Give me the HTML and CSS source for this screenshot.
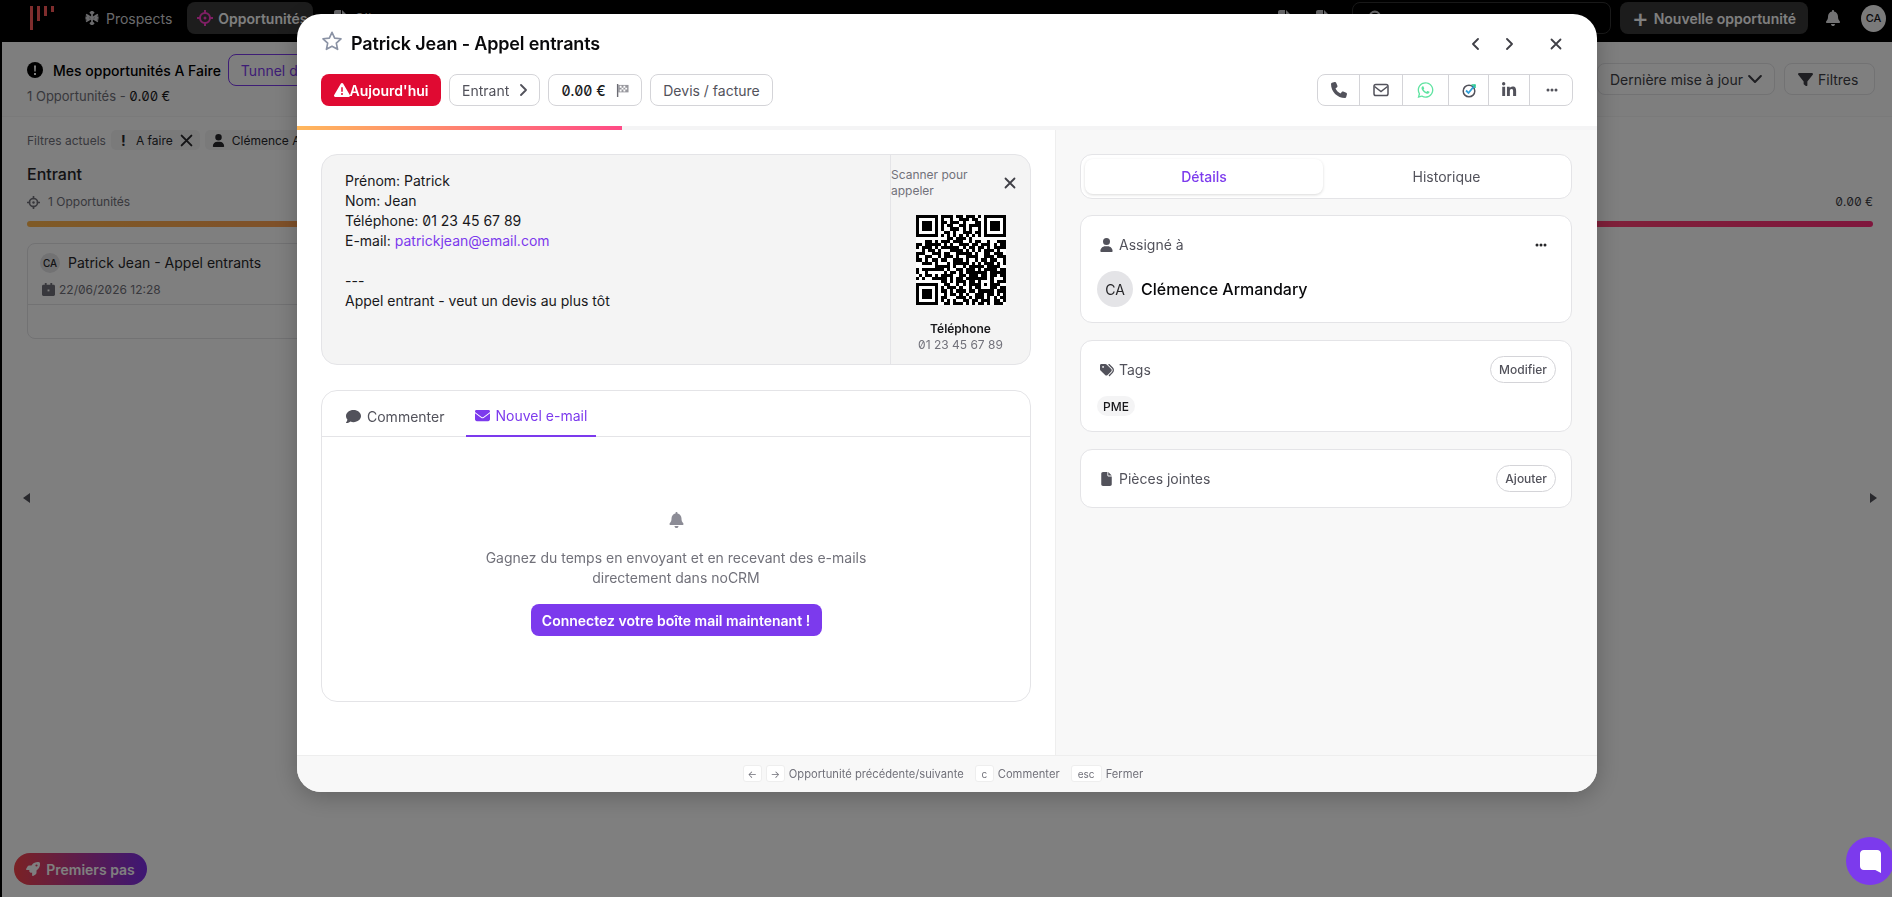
FILE: index.html
```html
<!DOCTYPE html>
<html lang="fr">
<head>
	<meta charset="utf-8">
	<title>Patrick Jean - Appel entrants</title>
	<link rel="stylesheet" href="styles.css">
</head>
<body>
	<!-- icones -->
	<svg class="sprite" xmlns="http://www.w3.org/2000/svg">
		<symbol id="i-phone" viewBox="0 0 512 512"><path d="M164.9 24.6c-7.7-18.6-28-28.5-47.4-23.2l-88 24C12.1 30.2 0 46 0 64C0 311.4 200.6 512 448 512c18 0 33.8-12.1 38.6-29.5l24-88c5.3-19.4-4.6-39.7-23.2-47.4l-96-40c-16.3-6.8-35.2-2.1-46.3 11.6L304.7 368C234.3 334.7 177.3 277.7 144 207.3L193.3 167c13.7-11.2 18.4-30 11.6-46.3l-40-96z"/></symbol>
		<symbol id="i-bell" viewBox="0 0 448 512"><path d="M224 0c-17.7 0-32 14.3-32 32V51.2C119 66 64 130.6 64 208v18.8c0 47-17.3 92.4-48.5 127.6l-7.4 8.3c-8.4 9.4-10.4 22.9-5.3 34.4S19.4 416 32 416H416c12.6 0 24-7.4 29.2-18.9s3.1-25-5.3-34.4l-7.4-8.3C401.3 319.2 384 273.9 384 226.8V208c0-77.4-55-142-128-156.8V32c0-17.7-14.3-32-32-32zm45.3 493.3c12-12 18.7-28.3 18.7-45.3H224 160c0 17 6.7 33.3 18.7 45.3s28.3 18.7 45.3 18.7s33.3-6.7 45.3-18.7z"/></symbol>
		<symbol id="i-user" viewBox="0 0 448 512"><path d="M224 256A128 128 0 1 0 224 0a128 128 0 1 0 0 256zm-45.7 48C79.8 304 0 383.8 0 482.3C0 498.7 13.3 512 29.7 512H418.3c16.4 0 29.7-13.3 29.7-29.7C448 383.8 368.2 304 269.7 304H178.3z"/></symbol>
		<symbol id="i-warn" viewBox="0 0 512 512"><path d="M256 32c14.2 0 27.3 7.5 34.5 19.8l216 368c7.3 12.4 7.3 27.7 .2 40.1S486.3 480 472 480H40c-14.3 0-27.6-7.7-34.7-20.1s-7-27.8 .2-40.1l216-368C228.7 39.5 241.8 32 256 32zm0 128c-13.3 0-24 10.7-24 24V296c0 13.3 10.7 24 24 24s24-10.7 24-24V184c0-13.3-10.7-24-24-24zm32 224a32 32 0 1 0 -64 0 32 32 0 1 0 64 0z"/></symbol>
		<symbol id="i-envelope" viewBox="0 0 512 512"><path d="M48 64C21.5 64 0 85.5 0 112c0 15.1 7.1 29.3 19.2 38.4L236.8 313.6c11.4 8.5 27 8.5 38.4 0L492.8 150.4c12.1-9.1 19.2-23.3 19.2-38.4c0-26.5-21.5-48-48-48H48zM0 176V384c0 35.3 28.7 64 64 64H448c35.3 0 64-28.7 64-64V176L294.4 339.2c-22.8 17.1-54 17.1-76.8 0L0 176z"/></symbol>
		<symbol id="i-comment" viewBox="0 0 512 512"><path d="M512 240c0 114.9-114.6 208-256 208c-37.1 0-72.3-6.4-104.1-17.9c-11.9 8.7-31.3 20.6-54.3 30.6C73.6 471.1 44.7 480 16 480c-6.5 0-12.3-3.9-14.8-9.9c-2.5-6-1.1-12.8 3.4-17.4l.3-.3c.3-.3 .7-.7 1.3-1.4c1.1-1.2 2.8-3.1 4.9-5.7c4.1-5 9.6-12.4 15.2-21.6c10-16.6 19.5-38.4 21.4-62.9C17.7 326.8 0 285.1 0 240C0 125.1 114.6 32 256 32s256 93.1 256 208z"/></symbol>
		<symbol id="i-file" viewBox="0 0 384 512"><path d="M0 64C0 28.7 28.7 0 64 0H224V128c0 17.7 14.3 32 32 32H384V448c0 35.3-28.7 64-64 64H64c-35.3 0-64-28.7-64-64V64zm384 64H256V0L384 128z"/></symbol>
		<symbol id="i-tags" viewBox="0 0 512 512"><path d="M345 39.1L472.8 168.4c52.4 53 52.4 138.2 0 191.2L360.8 472.9c-9.3 9.4-24.5 9.5-33.9 .2s-9.5-24.5-.2-33.9L438.6 325.9c33.9-34.3 33.9-89.4 0-123.7L310.9 72.9c-9.3-9.4-9.2-24.6 .2-33.9s24.6-9.2 33.9 .2zM0 229.5V80C0 53.5 21.5 32 48 32H197.5c17 0 33.3 6.7 45.3 18.7l168 168c25 25 25 65.5 0 90.5L277.3 442.7c-25 25-65.5 25-90.5 0l-168-168C6.7 262.7 0 246.5 0 229.5zM144 144a32 32 0 1 0 -64 0 32 32 0 1 0 64 0z"/></symbol>
		<symbol id="i-linkedin" viewBox="0 0 448 512"><path d="M100.28 448H7.4V148.9h92.88zM53.79 108.1C24.09 108.1 0 83.5 0 53.8a53.79 53.79 0 0 1 107.58 0c0 29.7-24.1 54.3-53.79 54.3zM447.9 448h-92.68V302.4c0-34.7-.7-79.2-48.29-79.2-48.29 0-55.69 37.7-55.69 76.7V448h-92.78V148.9h89.08v40.8h1.3c12.4-23.5 44.66-48.3 91.93-48.3 94 0 111.28 61.9 111.28 142.3V448z"/></symbol>
		<symbol id="i-whatsapp" viewBox="0 0 448 512"><path d="M380.9 97.1C339 55.1 283.2 32 223.9 32c-122.4 0-222 99.6-222 222 0 39.1 10.2 77.3 29.6 111L0 480l117.7-30.9c32.4 17.7 68.9 27 106.1 27h.1c122.3 0 224.1-99.6 224.1-222 0-59.3-25.2-115-67.1-157zm-157 341.6c-33.2 0-65.7-8.9-94-25.7l-6.7-4-69.8 18.3L72 359.2l-4.4-7c-18.5-29.4-28.2-63.3-28.2-98.2 0-101.7 82.8-184.5 184.6-184.5 49.3 0 95.6 19.2 130.4 54.1 34.8 34.9 56.2 81.2 56.1 130.5 0 101.8-84.9 184.6-186.6 184.6zm101.2-138.2c-5.5-2.8-32.8-16.2-37.9-18-5.1-1.9-8.8-2.8-12.5 2.8-3.7 5.6-14.3 18-17.6 21.8-3.2 3.7-6.5 4.2-12 1.4-32.6-16.3-54-29.1-75.5-66-5.7-9.8 5.7-9.1 16.3-30.3 1.8-3.7.9-6.9-.5-9.7-1.4-2.8-12.5-30.1-17.1-41.2-4.5-10.8-9.1-9.3-12.5-9.5-3.2-.2-6.9-.2-10.6-.2-3.7 0-9.7 1.4-14.8 6.9-5.1 5.6-19.4 19-19.4 46.3 0 27.3 19.9 53.7 22.6 57.4 2.8 3.7 39.1 59.7 94.8 83.8 35.2 15.2 49 16.5 66.6 13.9 10.7-1.6 32.8-13.4 37.4-26.4 4.6-13 4.6-24.1 3.2-26.4-1.3-2.5-5-3.9-10.5-6.6z"/></symbol>
		<symbol id="i-rocket" viewBox="0 0 512 512"><path d="M156.6 384.9L125.7 354c-8.5-8.5-11.5-20.8-7.7-32.2c3-8.9 7-20.5 11.8-33.8L24 288c-8.6 0-16.6-4.6-20.9-12.1s-4.2-16.7 .2-24.1l52.5-88.5c13-21.9 36.5-35.3 61.9-35.3l82.3 0c2.4-4 4.8-7.7 7.2-11.3C289.1-4.1 411.1-8.1 483.9 5.3c11.6 2.1 20.6 11.2 22.8 22.8c13.4 72.9 9.3 194.8-111.4 276.7c-3.5 2.4-7.3 4.8-11.3 7.2v82.3c0 25.4-13.4 49-35.3 61.9l-88.5 52.5c-7.4 4.4-16.6 4.5-24.1 .2s-12.1-12.2-12.1-20.9V380.8c-14.1 4.9-26.4 8.9-35.7 11.9c-11.2 3.6-23.4 .5-31.8-7.8zM384 168a40 40 0 1 0 0-80 40 40 0 1 0 0 80z"/></symbol>
		<symbol id="i-filter" viewBox="0 0 512 512"><path d="M3.9 54.9C10.5 40.9 24.5 32 40 32H472c15.5 0 29.5 8.9 36.1 22.9s4.6 30.5-5.2 42.5L320 320.9V448c0 12.1-6.8 23.2-17.7 28.6s-23.8 4.3-33.5-3l-64-48c-8.1-6-12.8-15.5-12.8-25.6V320.9L9 97.3C-.7 85.4-2.8 68.8 3.9 54.9z"/></symbol>
		<symbol id="i-target" viewBox="0 0 16 16"><circle cx="8" cy="8" r="5" fill="none" stroke="currentColor" stroke-width="2"/><circle cx="8" cy="8" r="1.5"/><path d="M7 0h2v4H7zM7 12h2v4H7zM0 7h4v2H0zM12 7h4v2h-4z"/></symbol>
		<symbol id="i-snow" viewBox="0 0 16 16"><path d="M8 1v14M2 4.5l12 7M14 4.5l-12 7M6 2l2 2 2-2M6 14l2-2 2 2M1.500 7l2.700 .7-.7-2.700M14.500 9l-2.700-.7 .7 2.700M14.500 7l-2.700 .7 .7-2.700M1.500 9l2.700-.7-.7 2.700" fill="none" stroke="currentColor" stroke-width="1.800"/></symbol>
		<symbol id="i-x" viewBox="0 0 12 12"><path d="M1.500 1.500l9 9M10.500 1.500l-9 9" fill="none" stroke="currentColor" stroke-width="1.800" stroke-linecap="round"/></symbol>
		<symbol id="i-left" viewBox="0 0 12 12"><path d="M8 1L3 6l5 5" fill="none" stroke="currentColor" stroke-width="1.800" stroke-linecap="round" stroke-linejoin="round"/></symbol>
		<symbol id="i-right" viewBox="0 0 12 12"><path d="M4 1l5 5-5 5" fill="none" stroke="currentColor" stroke-width="1.800" stroke-linecap="round" stroke-linejoin="round"/></symbol>
		<symbol id="i-down" viewBox="0 0 12 12"><path d="M1 3.500l5 5 5-5" fill="none" stroke="currentColor" stroke-width="1.800" stroke-linecap="round" stroke-linejoin="round"/></symbol>
		<symbol id="i-dots" viewBox="0 0 12 4"><circle cx="2" cy="2" r="1.500"/><circle cx="6" cy="2" r="1.500"/><circle cx="10" cy="2" r="1.500"/></symbol>
		<symbol id="i-mail" viewBox="0 0 16 14"><rect x="1" y="1.500" width="14" height="11" rx="1.800" fill="none" stroke="currentColor" stroke-width="1.500"/><path d="M1.500 3.500L8 8.500l6.500-5" fill="none" stroke="currentColor" stroke-width="1.500"/></symbol>
		<symbol id="i-flag" viewBox="0 0 14 14"><path d="M1 0h1.500v14H1z"/><path d="M2.500 1h11v8h-11z" opacity=".7"/><path d="M4 2h2v2H4zM8 2h2v2H8zM6 4h2v2H6zM10 4h2v2h-2zM4 6h2v2H4zM8 6h2v2H8z" fill="#fff"/></symbol>
		<symbol id="i-calendar" viewBox="0 0 14 14"><path d="M3 0h2v2h4V0h2v2h1.500c.8 0 1.500 .7 1.500 1.500v9c0 .8-.7 1.500-1.500 1.500h-11C.7 14 0 13.300 0 12.500v-9C0 2.700 .7 2 1.500 2H3z"/><path d="M6 7h2v2H6z" fill="#fff"/></symbol>
		<symbol id="i-alert" viewBox="0 0 16 16"><circle cx="8" cy="8" r="8"/><path d="M7 3.500h2l-.3 6H7.300zM7 11h2v2H7z" fill="#fff"/></symbol>
		<symbol id="i-search" viewBox="0 0 14 14"><circle cx="6" cy="6" r="4.500" fill="none" stroke="currentColor" stroke-width="2"/><path d="M9.500 9.500L13 13" stroke="currentColor" stroke-width="2"/></symbol>
	</svg>

	<div class="page">
		<header class="topbar">
			<svg class="logo" viewBox="0 0 24 24" aria-hidden="true"><path d="M0 0h3v24H0zM7 0h3v15H7zM14 0h3v10h-3zM21 0h3v6h-3z"/></svg>
			<a class="nav-item nav-first"><svg class="icon"><use href="#i-snow"/></svg>Prospects</a>
			<a class="nav-item nav-active"><svg class="icon icon-pink"><use href="#i-target"/></svg>Opportunités</a>
			<a class="nav-item nav-clients"><svg class="icon"><use href="#i-file"/></svg>Clients</a>
			<span class="nav-spacer"></span>
			<svg class="icon top-icon"><use href="#i-file"/></svg>
			<svg class="icon top-icon"><use href="#i-file"/></svg>
			<div class="search"><svg class="icon"><use href="#i-search"/></svg></div>
			<button class="new-btn"><span class="plus">+</span>Nouvelle opportunité</button>
			<svg class="icon top-bell"><use href="#i-bell"/></svg>
			<span class="top-avatar">CA</span>
		</header>

		<main class="board">
			<div class="board-head">
				<div>
					<div class="board-title">
						<svg class="icon"><use href="#i-alert"/></svg>
						<strong>Mes opportunités A Faire</strong>
						<span class="tunnel">Tunnel de vente</span>
					</div>
					<div class="board-sub">1 Opportunités - <span class="dark">0.00 €</span></div>
				</div>
				<div class="board-tools">
					<button class="tool-btn">Dernière mise à jour <svg class="icon-chevron"><use href="#i-down"/></svg></button>
					<button class="tool-btn tool-filter"><svg class="icon-funnel"><use href="#i-filter"/></svg> Filtres</button>
				</div>
			</div>
			<div class="board-body">
				<div class="filters">
					<span>Filtres actuels</span>
					<span class="filter-chip"><b class="bang">!</b> A faire <svg class="icon-xs"><use href="#i-x"/></svg></span>
					<span class="filter-chip"><svg class="icon-xs"><use href="#i-user"/></svg> Clémence Armandary</span>
				</div>
				<h2 class="col-title">Entrant</h2>
				<div class="col-meta">
					<span class="col-count"><svg class="icon-xs"><use href="#i-target"/></svg> 1 Opportunités</span>
					<span class="col-total">0.00 €</span>
				</div>
				<div class="col-bar"></div>
				<div class="lead">
					<div class="lead-top"><span class="lead-avatar">CA</span> Patrick Jean - Appel entrants</div>
					<div class="lead-date"><svg class="icon-xs"><use href="#i-calendar"/></svg> 22/06/2026 12:28</div>
					<div class="lead-foot"></div>
				</div>
			</div>
			<span class="scroll-arrow scroll-left"></span>
			<span class="scroll-arrow scroll-right"></span>
			<button class="first-steps"><svg class="icon"><use href="#i-rocket"/></svg> Premiers pas</button>
		</main>
	</div>

	<div class="overlay">
		<section class="modal">
			<div class="modal-head">
				<div class="title-row">
					<svg class="star" viewBox="0 0 24 24"><path d="M12 2.500l2.900 6.300 6.900 .8-5.100 4.700 1.400 6.800-6.100-3.400-6.100 3.400 1.400-6.800-5.100-4.700 6.900-.8z"/></svg>
					<h1>Patrick Jean - Appel entrants</h1>
					<div class="title-nav">
						<svg class="nav-arrow"><use href="#i-left"/></svg>
						<svg class="nav-arrow"><use href="#i-right"/></svg>
						<svg class="nav-close"><use href="#i-x"/></svg>
					</div>
				</div>
				<div class="action-row">
					<button class="pill pill-red"><svg class="icon"><use href="#i-warn"/></svg>Aujourd'hui</button>
					<button class="pill pill-step">Entrant <svg class="icon-sm"><use href="#i-right"/></svg></button>
					<button class="pill pill-amount"><span>0.00 €</span> <svg class="icon-flag"><use href="#i-flag"/></svg></button>
					<button class="pill pill-quote">Devis / facture</button>
					<div class="contact-group">
						<button><svg class="icon"><use href="#i-phone"/></svg></button>
						<button><svg class="icon"><use href="#i-mail"/></svg></button>
						<button class="wa"><svg class="icon-wa"><use href="#i-whatsapp"/></svg></button>
						<button>
							<svg class="icon" viewBox="0 0 16 16"><circle cx="8" cy="9" r="5.800" fill="none" stroke="#52525b" stroke-width="1.500"/><path d="M5 8.500l2.500 2.500L14 3" fill="none" stroke="#2f9fd8" stroke-width="1.800"/><path d="M10.500 3H14v3" fill="none" stroke="#2ecc8f" stroke-width="1.500"/></svg>
						</button>
						<button><svg class="icon"><use href="#i-linkedin"/></svg></button>
						<button><svg class="icon-dots"><use href="#i-dots"/></svg></button>
					</div>
				</div>
			</div>
			<div class="progress"><div class="progress-fill"></div></div>

			<div class="modal-body">
				<div class="col-left">
					<div class="info-card">
						<div class="info-text">
							<p>Prénom: Patrick</p>
							<p>Nom: Jean</p>
							<p>Téléphone: 01 23 45 67 89</p>
							<p>E-mail: <a href="#">patrickjean@email.com</a></p>
							<p>&nbsp;</p>
							<p>---</p>
							<p>Appel entrant - veut un devis au plus tôt</p>
						</div>
						<div class="qr-pane">
							<div class="qr-head">
								<span>Scanner pour appeler</span>
								<svg class="qr-close"><use href="#i-x"/></svg>
							</div>
							<svg id="qr" class="qr" viewBox="0 0 29 29" shape-rendering="crispEdges"></svg>
							<div class="qr-label">Téléphone</div>
							<div class="qr-number">01 23 45 67 89</div>
						</div>
					</div>

					<div class="compose-card">
						<div class="compose-tabs">
							<a class="compose-tab"><svg class="icon"><use href="#i-comment"/></svg>Commenter</a>
							<a class="compose-tab compose-tab--on"><svg class="icon"><use href="#i-envelope"/></svg>Nouvel e-mail</a>
						</div>
						<div class="compose-empty">
							<svg class="empty-bell"><use href="#i-bell"/></svg>
							<p>Gagnez du temps en envoyant et en recevant des e-mails<br>directement dans noCRM</p>
							<button class="connect-btn">Connectez votre boîte mail maintenant !</button>
						</div>
					</div>
				</div>

				<aside class="col-right">
					<div class="side-tabs">
						<span class="side-tab side-tab--on">Détails</span>
						<span class="side-tab side-tab--off">Historique</span>
					</div>
					<div class="side-card">
						<div class="side-head">
							<span class="side-label"><span class="side-icon"><svg class="icon-side"><use href="#i-user"/></svg></span>Assigné à</span>
							<svg class="side-dots"><use href="#i-dots"/></svg>
						</div>
						<div class="assignee"><span class="assignee-avatar">CA</span>Clémence Armandary</div>
					</div>
					<div class="side-card">
						<div class="side-head">
							<span class="side-label"><span class="side-icon"><svg class="icon-tags"><use href="#i-tags"/></svg></span>Tags</span>
							<button class="round-btn">Modifier</button>
						</div>
						<span class="tag-chip">PME</span>
					</div>
					<div class="side-card">
						<div class="side-head">
							<span class="side-label"><span class="side-icon"><svg class="icon-side"><use href="#i-file"/></svg></span>Pièces jointes</span>
							<button class="round-btn">Ajouter</button>
						</div>
					</div>
				</aside>
			</div>

			<footer class="modal-foot">
				<kbd>←</kbd><kbd class="key-next">→</kbd><span>Opportunité précédente/suivante</span>
				<kbd class="key-gap">c</kbd><span>Commenter</span>
				<kbd class="key-gap key-esc">esc</kbd><span>Fermer</span>
			</footer>
		</section>
	</div>

	<button class="chat-btn" aria-label="Chat">
		<svg viewBox="0 0 22 24"><path d="M4 0h14c2.200 0 4 1.800 4 4v20l-6-3H4c-2.200 0-4-1.800-4-4V4c0-2.200 1.800-4 4-4z"/></svg>
	</button>

	<script src="qr.js"></script>
</body>
</html>
```
FILE: styles.css
```css
* {
	box-sizing: border-box;
}

html,
body {
	height: 100%;
}

body {
	margin: 0;
	background: #000;
	color: #18181b;
	font-family: Inter, "Noto Sans", sans-serif;
	font-size: 14px;
	font-feature-settings: "zero";
	overflow: hidden;
}

button {
	font: inherit;
	font-feature-settings: inherit;
	cursor: pointer;
}

h1,
h2,
p {
	margin: 0;
}

.sprite {
	display: none;
}

svg {
	fill: currentColor;
	flex: none;
}

.icon {
	width: 16px;
	height: 16px;
}

.icon-sm {
	width: 12px;
	height: 12px;
}

.icon-xs {
	width: 13px;
	height: 13px;
}

/* page derriere la modale */
.page {
	height: 100%;
	display: flex;
	flex-direction: column;
}

.topbar {
	height: 42px;
	flex: none;
	display: flex;
	align-items: center;
	padding: 0 6px 6px 30px;
	color: #fff;
}

.logo {
	width: 24px;
	height: 24px;
	fill: #ff5a5a;
}

.nav-item {
	display: flex;
	align-items: center;
	gap: 6px;
	color: #d4d4d8;
}

.nav-first {
	margin-left: 30px;
}

.nav-active {
	margin-left: 15px;
	width: 126px;
	height: 32px;
	padding: 0 10px;
	gap: 5px;
	border-radius: 8px;
	background: #3a3a3a;
	color: #fff;
	font-weight: 600;
	white-space: nowrap;
}

.icon-pink {
	color: #ff3ec9;
}

.nav-clients {
	margin-left: 19px;
}

.nav-spacer {
	flex: 1;
}

.top-icon {
	margin-right: 22px;
	color: #d4d4d8;
}

.search {
	width: 259px;
	height: 32px;
	display: flex;
	align-items: center;
	padding-left: 15px;
	border: 1px solid #333;
	border-radius: 8px;
	color: #d4d4d8;
}

.new-btn {
	margin-left: 9px;
	width: 188px;
	height: 32px;
	display: flex;
	align-items: center;
	justify-content: center;
	gap: 5px;
	border: 0;
	border-radius: 8px;
	background: #393939;
	color: #fff;
	font-size: 14px;
	font-weight: 600;
}

.plus {
	font-size: 25px;
	font-weight: 500;
	line-height: 22px;
}

.top-bell {
	margin: 0 20px 0 17px;
	color: #e4e4e7;
}

.top-avatar {
	width: 25px;
	height: 27px;
	border-radius: 50%;
	background: #f4f4f5;
	color: #18181b;
	font-size: 11px;
	font-weight: 500;
	display: flex;
	align-items: center;
	justify-content: center;
}

.board {
	position: relative;
	flex: 1;
	margin-left: 2px;
	background: #fff;
	border-radius: 16px 0 0 0;
}

.board-head {
	height: 75px;
	display: flex;
	justify-content: space-between;
	align-items: center;
	padding: 0 17px 0 25px;
	border-bottom: 1px solid #f4f4f5;
	background: #fcfcfc;
}

.board-title {
	display: flex;
	align-items: center;
	gap: 7px;
	color: #000;
}

.board-title strong {
	font-weight: 500;
	margin-left: 3px;
}

.tunnel {
	height: 32px;
	padding: 0 12px;
	display: flex;
	align-items: center;
	border: 1px solid #7c3aed;
	border-radius: 8px;
	color: #7c3aed;
	font-size: 14px;
	white-space: nowrap;
}

.board-sub {
	margin-top: 2px;
	font-size: 13px;
	color: #71717a;
}

.dark {
	color: #18181b;
	font-feature-settings: "zero", "tnum";
}

.board-tools {
	display: flex;
	gap: 9px;
}

.tool-btn {
	height: 32px;
	padding: 0 12px;
	display: flex;
	align-items: center;
	gap: 5px;
	border: 1px solid #e4e4e7;
	border-radius: 8px;
	background: #fff;
	color: #3f3f46;
}

.tool-filter {
	width: 91px;
	padding: 0 0 0 13px;
}

.icon-chevron {
	width: 14px;
	height: 14px;
}

.icon-funnel {
	width: 15px;
	height: 15px;
}

.board-body {
	padding: 13px 19px 0 25px;
}

.filters {
	display: flex;
	align-items: center;
	gap: 5px;
	font-size: 12px;
	color: #71717a;
}

.filter-chip {
	height: 20px;
	padding: 0 7px;
	display: inline-flex;
	align-items: center;
	gap: 7px;
	border-radius: 5px;
	background: #f4f4f5;
	color: #27272a;
}

.bang {
	font-size: 14px;
	width: 11px;
	text-align: center;
}

.col-title {
	margin-top: 14px;
	font-size: 16px;
	font-weight: 500;
	line-height: 20px;
	color: #27272a;
}

.col-meta {
	margin-top: 9px;
	display: flex;
	justify-content: space-between;
	font-size: 12px;
	line-height: 18px;
	color: #71717a;
}

.col-count {
	display: flex;
	align-items: center;
	gap: 8px;
}

.col-total {
	color: #3f3f46;
	font-feature-settings: "zero", "tnum";
}

.col-bar {
	margin-top: 10px;
	height: 6px;
	border-radius: 3px;
	background: linear-gradient(90deg, #ffb54d, #ff2d7a);
}

.lead {
	margin-top: 16px;
	width: 320px;
	height: 96px;
	border: 1px solid #e4e4e7;
	border-radius: 8px;
}

.lead-top {
	height: 37px;
	padding: 0 12px;
	display: flex;
	align-items: center;
	gap: 8px;
	color: #27272a;
}

.lead-avatar {
	width: 20px;
	height: 20px;
	border-radius: 50%;
	background: #e4e4e7;
	font-size: 10px;
	font-weight: 500;
	display: flex;
	align-items: center;
	justify-content: center;
}

.lead-date {
	height: 20px;
	margin-top: -2px;
	padding-left: 14px;
	display: flex;
	align-items: center;
	gap: 4px;
	font-size: 12px;
	color: #71717a;
}

.lead-foot {
	margin-top: 5px;
	border-top: 1px solid #e4e4e7;
}

.scroll-arrow {
	position: absolute;
	top: 451px;
	border-top: 5px solid transparent;
	border-bottom: 5px solid transparent;
}

.scroll-left {
	left: 21px;
	border-right: 7px solid #52525b;
}

.scroll-right {
	right: 15px;
	border-left: 7px solid #52525b;
}

.first-steps {
	position: absolute;
	left: 12px;
	bottom: 12px;
	width: 133px;
	height: 32px;
	display: flex;
	align-items: center;
	justify-content: center;
	gap: 6px;
	border: 0;
	border-radius: 16px;
	background: linear-gradient(90deg, #f5444a, #7c2ee8);
	color: #fff;
	font-weight: 600;
}

.first-steps .icon {
	width: 14px;
	height: 14px;
}

/* modale */
.overlay {
	position: fixed;
	inset: 0;
	z-index: 10;
	padding: 14px 0 0 297px;
	background: rgba(0, 0, 0, .5);
}

.modal {
	width: 1300px;
	height: 778px;
	display: flex;
	flex-direction: column;
	overflow: hidden;
	border-radius: 24px;
	background: #fff;
	box-shadow: 0 4px 24px rgba(0, 0, 0, .25);
}

.modal-head {
	height: 112px;
	flex: none;
	padding: 16px 24px 0;
}

.title-row {
	height: 28px;
	display: flex;
	align-items: center;
}

.star {
	width: 22px;
	height: 22px;
	margin: -7px 8px 0 0;
	fill: none;
	stroke: #8b93a5;
	stroke-width: 1.800;
	stroke-linejoin: round;
}

h1 {
	font-size: 18px;
	font-weight: 600;
	line-height: 28px;
	letter-spacing: -.15px;
	color: #09090b;
}

.title-nav {
	margin-left: auto;
	padding-right: 11px;
	display: flex;
	align-items: center;
	color: #3f3f46;
}

.nav-arrow {
	width: 12px;
	height: 12px;
	margin-right: 21px;
}

.nav-close {
	width: 12px;
	height: 12px;
	margin-left: 14px;
}

.action-row {
	margin-top: 16px;
	height: 32px;
	display: flex;
	gap: 8px;
}

.pill {
	height: 32px;
	display: flex;
	align-items: center;
	justify-content: center;
	border: 1px solid #d4d4d8;
	border-radius: 8px;
	background: #fff;
	color: #52525b;
	white-space: nowrap;
}

.pill-red {
	width: 120px;
	border: 0;
	background: #e00a32;
	color: #fff;
	font-weight: 600;
}

.pill-step {
	width: 91px;
	padding: 0 0 0 12px;
	justify-content: flex-start;
	gap: 8px;
}

.pill-amount {
	width: 94px;
	gap: 10px;
	color: #18181b;
	font-weight: 500;
	font-feature-settings: "zero", "tnum";
}

.icon-flag {
	width: 13px;
	height: 13px;
	color: #6b6b73;
}

.pill-quote {
	width: 123px;
}

.contact-group {
	margin-left: auto;
	width: 256px;
	height: 32px;
	display: grid;
	grid-template-columns: 42px 43px 46px 40px 41px 44px;
	border: 1px solid #d4d4d8;
	border-radius: 8px;
}

.contact-group button {
	display: flex;
	align-items: center;
	justify-content: center;
	padding: 0;
	border: 0;
	border-right: 1px solid #d4d4d8;
	background: none;
	color: #52525b;
}

.contact-group button:last-child {
	border-right: 0;
}

.contact-group .wa {
	color: #5fe3a1;
}

.icon-wa {
	width: 17px;
	height: 18px;
}

.icon-dots {
	width: 12px;
	height: 4px;
}

.progress {
	height: 4px;
	flex: none;
	background: #f4f4f5;
}

.progress-fill {
	width: 325px;
	height: 100%;
	background: linear-gradient(90deg, #ffb85c, #ff4a86);
}

.modal-body {
	flex: 1;
	min-height: 0;
	display: flex;
}

.col-left {
	width: 758px;
	flex: none;
	padding: 24px;
}

.info-card {
	height: 211px;
	display: flex;
	border: 1px solid #e4e4e7;
	border-radius: 16px;
	background: #f4f4f4;
}

.info-text {
	flex: 1;
	padding: 16px 23px;
	line-height: 20px;
	color: #18181b;
}

.info-text a {
	color: #7c3aed;
	text-decoration: none;
}

.qr-pane {
	width: 140px;
	flex: none;
	padding-top: 12px;
	border-left: 1px solid #e4e4e7;
	display: flex;
	flex-direction: column;
	align-items: center;
	font-size: 12px;
	line-height: 16px;
}

.qr-head {
	align-self: stretch;
	display: flex;
	align-items: center;
	padding-right: 14px;
	color: #71717a;
}

.qr-head span {
	width: 90px;
	margin-right: auto;
}

.qr-close {
	width: 12px;
	height: 12px;
	color: #3f3f46;
}

.qr {
	width: 90px;
	height: 90px;
	margin-top: 16px;
	background: #fff;
	fill: #000;
}

.qr-label {
	margin-top: 16px;
	font-weight: 600;
	color: #18181b;
}

.qr-number {
	color: #71717a;
}

.compose-card {
	margin-top: 25px;
	height: 312px;
	border: 1px solid #e4e4e7;
	border-radius: 16px;
}

.compose-tabs {
	height: 46px;
	padding-left: 13px;
	display: flex;
	gap: 4px;
	border-bottom: 1px solid #e4e4e7;
}

.compose-tab {
	height: 46px;
	padding: 4px 9px 0 11px;
	display: flex;
	align-items: center;
	gap: 6px;
	color: #52525b;
	white-space: nowrap;
}

.compose-tab .icon {
	width: 15px;
	height: 15px;
}

.compose-tab--on {
	margin-left: 9px;
	width: 130px;
	padding-left: 9px;
	gap: 5px;
	border-bottom: 2px solid #7c3aed;
	color: #7c3aed;
}

.compose-empty {
	display: flex;
	flex-direction: column;
	align-items: center;
	padding-top: 75px;
}

.empty-bell {
	width: 15px;
	height: 16px;
	color: #8c8c96;
}

.compose-empty p {
	margin-top: 20px;
	line-height: 20px;
	text-align: center;
	color: #71717a;
}

.connect-btn {
	margin-top: 16px;
	width: 291px;
	height: 32px;
	border: 0;
	border-radius: 8px;
	background: #7c3aed;
	color: #fff;
	font-weight: 600;
}

.col-right {
	flex: 1;
	padding: 24px 25px 0 24px;
	border-left: 1px solid #eee;
	background: #f8f8f8;
	display: flex;
	flex-direction: column;
	gap: 17px;
}

.side-tabs {
	height: 45px;
	margin-bottom: -1px;
	padding: 4px 3px 4px 4px;
	display: grid;
	grid-template-columns: 238px 1fr;
	border: 1px solid #e4e4e7;
	border-radius: 12px;
	background: #fff;
}

.side-tab {
	display: flex;
	align-items: center;
	justify-content: center;
	color: #52525b;
}

.side-tab--off {
	padding-left: 2px;
}

.side-tab--on {
	border-radius: 8px;
	background: #fff;
	box-shadow: 0 1px 3px rgba(0, 0, 0, .15);
	color: #7c3aed;
	font-weight: 500;
}

.side-card {
	padding: 15px 15px 15px 16px;
	border: 1px solid #e4e4e7;
	border-radius: 12px;
	background: #fff;
}

.side-head {
	height: 27px;
	display: flex;
	align-items: center;
	justify-content: space-between;
}

.side-label {
	display: flex;
	align-items: center;
	color: #52525b;
}

.side-icon {
	width: 22px;
	display: flex;
	justify-content: center;
	padding-right: 3px;
}

.icon-side {
	width: 13px;
	height: 14px;
	color: #52525b;
}

.icon-tags {
	width: 16px;
	height: 14px;
	color: #52525b;
}

.side-dots {
	width: 12px;
	height: 4px;
	margin-right: 9px;
	color: #27272a;
}

.assignee {
	margin-top: 13px;
	display: flex;
	align-items: center;
	gap: 8px;
	font-size: 16px;
	font-weight: 500;
	color: #09090b;
}

.assignee-avatar {
	width: 36px;
	height: 36px;
	border-radius: 50%;
	background: #e4e4e7;
	display: flex;
	align-items: center;
	justify-content: center;
	font-size: 14px;
	font-weight: 400;
	color: #27272a;
}

.round-btn {
	height: 27px;
	padding: 0 8px;
	border: 1px solid #d4d4d8;
	border-radius: 14px;
	background: #fff;
	color: #52525b;
	font-size: 12px;
	font-weight: 500;
}

.tag-chip {
	display: inline-flex;
	align-items: center;
	height: 20px;
	margin-top: 13px;
	padding: 0 6px;
	border-radius: 10px;
	background: #f4f4f5;
	color: #18181b;
	font-size: 12px;
	font-weight: 500;
}

.modal-foot {
	height: 37px;
	flex: none;
	padding-right: 8px;
	display: flex;
	align-items: center;
	justify-content: center;
	border-top: 1px solid #eee;
	background: #f8f8f8;
	font-size: 11.2px;
	color: #71717a;
}

kbd {
	width: 19px;
	height: 17px;
	margin-right: 4px;
	margin-top: -1px;
	display: flex;
	align-items: center;
	justify-content: center;
	border: 1px solid #eee;
	border-radius: 3px;
	background: #fff;
	font-family: inherit;
	font-size: 10px;
	color: #71717a;
}

.key-gap {
	margin-left: 11px;
}

.key-esc {
	width: 31px;
}

.chat-btn {
	position: fixed;
	z-index: 20;
	left: 1846px;
	top: 837px;
	width: 48px;
	height: 48px;
	padding: 0;
	border: 0;
	border-radius: 50%;
	background: #7c3aed;
	display: flex;
	align-items: center;
	justify-content: center;
}

.chat-btn svg {
	width: 21px;
	height: 23px;
	fill: #fff;
}
```
FILE: qr.js
```js
// matrice du QR code, une ligne par rangee
const rows = [
	'#######.####.##.###.#.#######',
	'#.....#.#..#..###.##..#.....#',
	'#.###.#.##.###.#...##.#.###.#',
	'#.###.#.#.##..##.####.#.###.#',
	'#.###.#.#..###.#.#..#.#.###.#',
	'#.....#..##.#..###.##.#.....#',
	'#######.#.#.#.#.#.#.#.#######',
	'..........##.###.#...........',
	'...##.#.###.###..#.##..#..###',
	'##.#####.#.#..###.##.###.#.##',
	'#.###.#.######.#.##.##.#.####',
	'..#.##.#...####.#.#.#.###.#..',
	'###..###.##..#####.#..##.###.',
	'#..##..#.###.#..####..###.###',
	'##.#.##.##..###.#..#.##.##..#',
	'..###.#...#.#####.#.#.###.#.#',
	'......#####.#..#.#####.####..',
	'#.#######.#..##.###.#.####.##',
	'#..#.....#.##.#.#######.#####',
	'.#.##.#.####..##.###.##.##.##',
	'#.#..#####.#.##.#######.#...#',
	'........##.#.###.##.#...#.###',
	'#######..##..#.#.####.#.###..',
	'#.....#.#.###.#..#.##...##.##',
	'#.###.#.##.#.###.##.#####.###',
	'#.###.#..#.##.#.#..###.##.#.#',
	'#.###.#.##...###.#.###.#.#.##',
	'#.....#.#.#.#..##.##.###.##.#',
	'#######..##.###.#.#.##.#.###.'
];

let d = '';
rows.forEach((row, y) => {
	[...row].forEach((cell, x) => {
		if (cell === '#') d += `M${x} ${y}h1v1h-1z`;
	});
});

const path = document.createElementNS('http://www.w3.org/2000/svg', 'path');
path.setAttribute('d', d);
document.getElementById('qr').appendChild(path);
```
